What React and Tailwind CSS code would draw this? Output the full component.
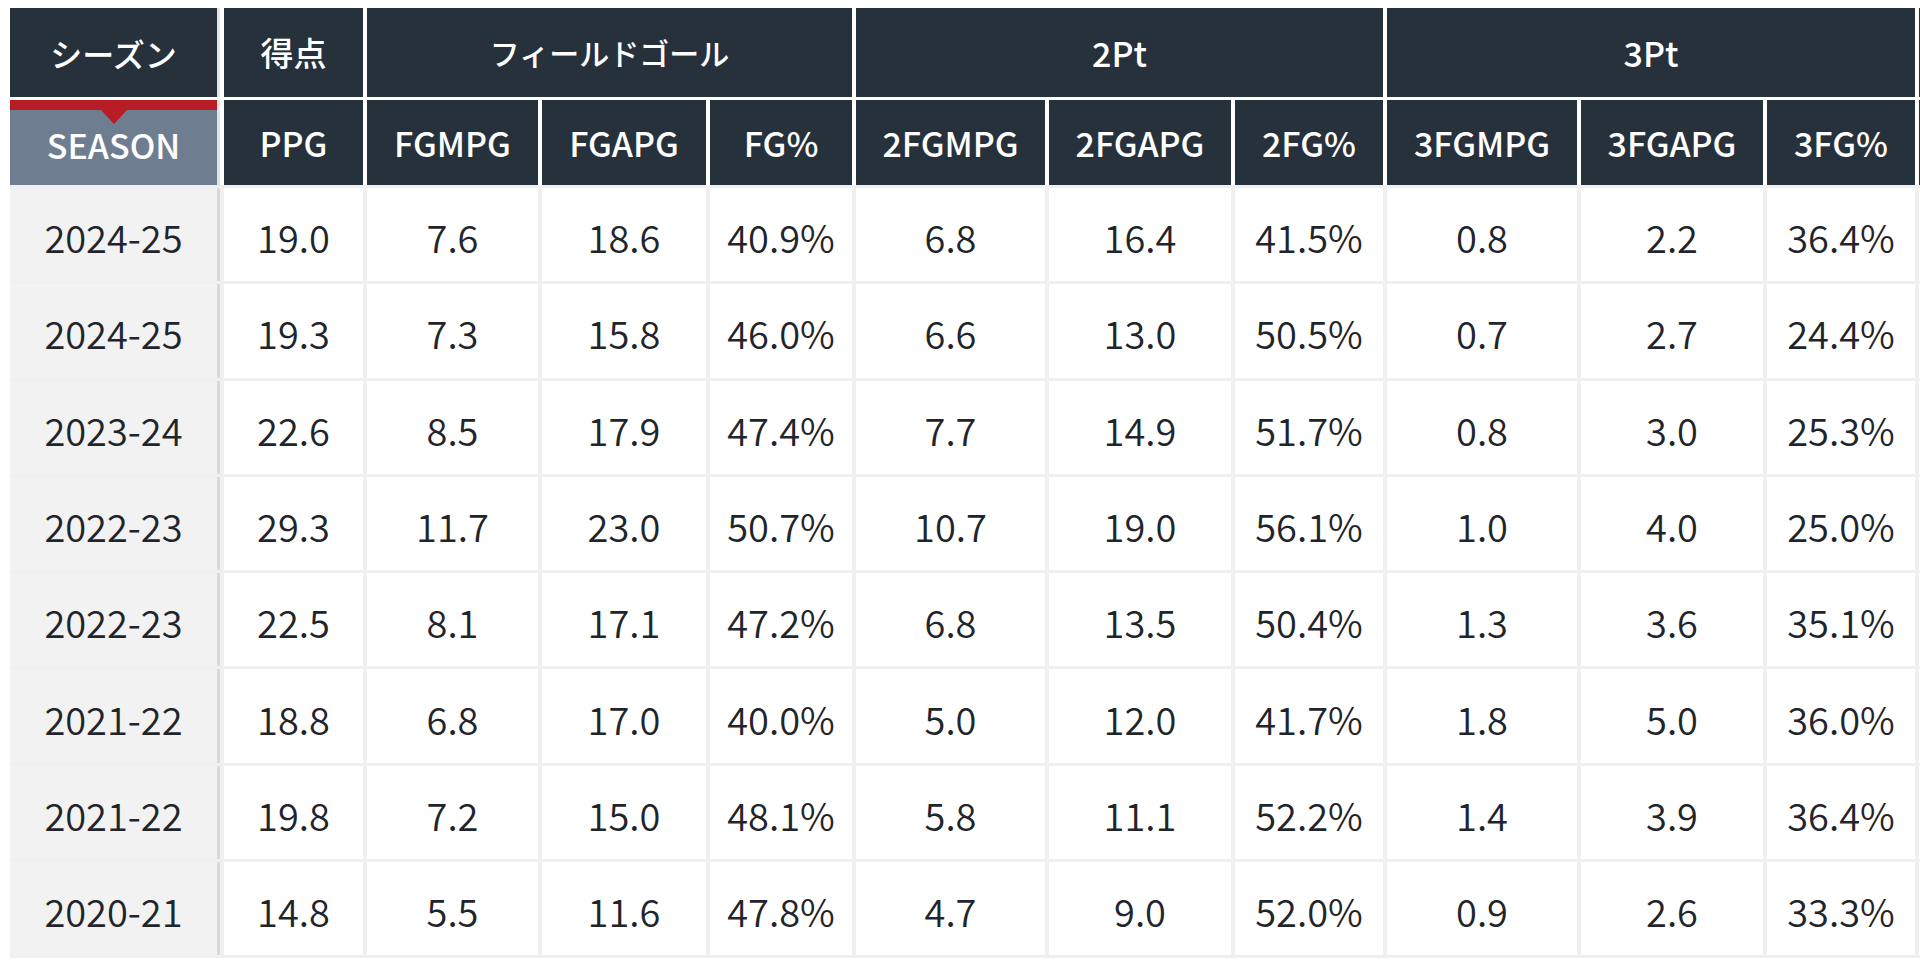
import React from "react";

const rows = [
  ["2024-25", "19.0", "7.6", "18.6", "40.9%", "6.8", "16.4", "41.5%", "0.8", "2.2", "36.4%"],
  ["2024-25", "19.3", "7.3", "15.8", "46.0%", "6.6", "13.0", "50.5%", "0.7", "2.7", "24.4%"],
  ["2023-24", "22.6", "8.5", "17.9", "47.4%", "7.7", "14.9", "51.7%", "0.8", "3.0", "25.3%"],
  ["2022-23", "29.3", "11.7", "23.0", "50.7%", "10.7", "19.0", "56.1%", "1.0", "4.0", "25.0%"],
  ["2022-23", "22.5", "8.1", "17.1", "47.2%", "6.8", "13.5", "50.4%", "1.3", "3.6", "35.1%"],
  ["2021-22", "18.8", "6.8", "17.0", "40.0%", "5.0", "12.0", "41.7%", "1.8", "5.0", "36.0%"],
  ["2021-22", "19.8", "7.2", "15.0", "48.1%", "5.8", "11.1", "52.2%", "1.4", "3.9", "36.4%"],
  ["2020-21", "14.8", "5.5", "11.6", "47.8%", "4.7", "9.0", "52.0%", "0.9", "2.6", "33.3%"],
];

const subHeads = ["PPG", "FGMPG", "FGAPG", "FG%", "2FGMPG", "2FGAPG", "2FG%", "3FGMPG", "3FGAPG", "3FG%"];

const cols =
  "grid-cols-[210px_139px_171px_164px_142px_189px_182px_148px_190px_182px_148px_200px]";

const font = { fontFamily: '"Noto Sans CJK JP", "Noto Sans", sans-serif' };

function HeadCell({ children, className = "" }) {
  return (
    <div
      className={`bg-[#27313b] text-white flex items-center justify-center font-medium ${className}`}
    >
      {children}
    </div>
  );
}

export default function App() {
  return (
    <div className="w-[1920px] h-[966px] overflow-hidden bg-white" style={font}>
      <div className="w-[2109px] pl-[10px] pt-[8px]">
        {/* header */}
        <div className={`grid ${cols} grid-rows-[89px_85px] gap-x-[4px] gap-y-[3px] bg-white`}>
          <div className="flex border-r-[3px] border-[#e4e4e4]">
            <HeadCell className="flex-1 text-[32px]">シーズン</HeadCell>
          </div>
          <HeadCell className="text-[33px]">得点</HeadCell>
          <HeadCell className="col-span-3 text-[30px]">フィールドゴール</HeadCell>
          <HeadCell className="col-span-3 text-[34px]">2Pt</HeadCell>
          <HeadCell className="col-span-3 text-[34px]">3Pt</HeadCell>
          <HeadCell />

          <div className="flex border-r-[3px] border-[#e4e4e4]">
            <div className="relative flex-1 bg-[#6e7e90] border-t-[10px] border-[#b81c25] text-white text-[34px] font-medium flex items-center justify-center pb-[6px]">
              <span className="absolute left-1/2 -translate-x-1/2 top-0 w-0 h-0 border-l-[13px] border-r-[13px] border-t-[14px] border-l-transparent border-r-transparent border-t-[#b81c25]" />
              SEASON
            </div>
          </div>
          {subHeads.map((h) => (
            <HeadCell key={h} className="text-[34px]">
              {h}
            </HeadCell>
          ))}
          <HeadCell />
        </div>

        {/* body */}
        <div className={`grid ${cols} auto-rows-[93.3px] gap-x-[4px] gap-y-[3px] bg-[#f0f0f0] py-[3px]`}>
          {rows.map((r, i) => (
            <React.Fragment key={i}>
              <div className="flex border-r-[3px] border-[#d9d9d9]">
                <div className="flex-1 bg-[#f2f2f2] flex items-center justify-center pt-[4px] text-[38px] font-[350] text-[#1f252b]">
                  {r[0]}
                </div>
              </div>
              {r.slice(1).map((v, j) => (
                <div
                  key={j}
                  className="bg-white flex items-center justify-center pt-[4px] text-[38px] font-[350] text-[#1f252b]"
                >
                  {v}
                </div>
              ))}
              <div className="bg-white" />
            </React.Fragment>
          ))}
        </div>
      </div>
    </div>
  );
}
